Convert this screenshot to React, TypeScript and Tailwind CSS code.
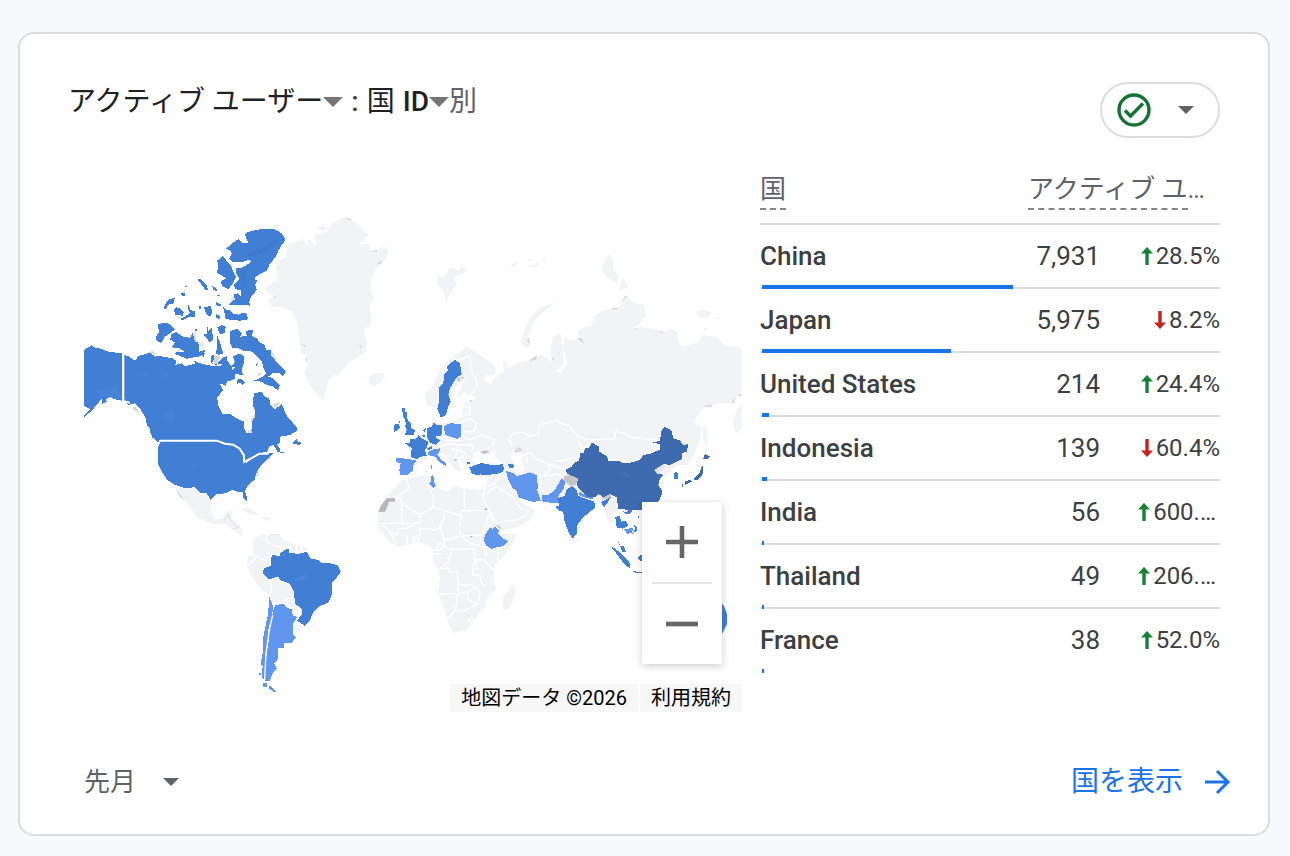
import { useState } from "react";

const rows = [
    { country: 'China', users: '7,931', change: '28.5%', up: true, bar: 251 },
    { country: 'Japan', users: '5,975', change: '8.2%', up: false, bar: 189 },
    { country: 'United States', users: '214', change: '24.4%', up: true, bar: 7 },
    { country: 'Indonesia', users: '139', change: '60.4%', up: false, bar: 5 },
    { country: 'India', users: '56', change: '600.…', up: true, bar: 2 },
    { country: 'Thailand', users: '49', change: '206.…', up: true, bar: 2 },
    { country: 'France', users: '38', change: '52.0%', up: true, bar: 2 },
];

const LAND = '#f1f3f4';
const LOW = '#6196ee';
const MID = '#417fd5';
const HIGH = '#3e6ab0';
const SHADE = '#c4c4c4';

function Caret({ className }: { className: string }) {
    return (
        <svg className={className} viewBox="0 0 20 10" preserveAspectRatio="none" fill="currentColor" aria-hidden="true">
            <path d="M0 0H20L10 10Z" />
        </svg>
    )
}

function Trend({ up }: { up: boolean }) {
    return up ? (
        <svg className="w-3 h-[18px] text-[#188038]" viewBox="0 0 12 18" fill="currentColor" aria-label="up">
            <path d="M6 0L12 6.5H7.7V18H4.3V6.5H0Z" />
        </svg>
    ) : (
        <svg className="w-3 h-[18px] text-[#c5221f]" viewBox="0 0 12 18" fill="currentColor" aria-label="down">
            <path d="M6 18L0 11.5H4.3V0H7.7V11.5H12Z" />
        </svg>
    )
}

// each continent is drawn on its own sheet at three times the map scale
function WorldMap() {
    return (
        <svg className="block w-full" viewBox="84 170 658 542" role="img" aria-label="国別のアクティブ ユーザー">
            {/* Eurasia */}
            <g fill={LAND}>
                <path d="M426 405L425 393L433 387L438 373L445 365L450 357L460 352L467 347L477 353L492 363L496 369L494 375L486 375L484 380L490 384L497 376L504 372L503 362L505 361L508 368L520 362L527 361L537 356L543 355L553 362L550 352L553 336L560 333L562 340L563 350L563 365L556 371L560 373L566 367L567 362L563 347L565 337L570 340L580 339L578 330L592 325L593 317L600 312L613 308L620 307L627 295L633 303L644 305L646 315L640 324L633 328L643 327L667 332L670 328L677 332L679 344L684 347L699 342L702 335L717 337L725 346L738 347L742 350V393L733 403H720L705 407L693 422L702 427L700 440L693 457L687 465L678 465L664 476L660 490L640 512L622 508L615 512L613 523L607 519L602 503L594 505L573 538L562 506L542 502L520 498L513 490L519 500L526 505L535 510L530 520L517 527L501 531L495 520L484 500L487 483L489 478L472 476L468 466L458 459L461 472L455 470L446 456L440 452L448 465L430 450L426 460L400 476L397 460L411 458L407 445L420 434L431 425L434 418L438 424L452 421L463 417L459 406L457 396L462 386L466 378L455 388L448 405L446 414L440 418L436 408Z" />
                <path d="M661 447L666 440L668 448L664 454Z" />
                <path d="M703 426L707 428L708 445L703 443Z" />
                <path d="M742 403L737 410L733 420L735 431L738 433L742 427Z" />
                <path d="M437 275L443 278L450 268L456 269L460 272L454 278L457 284L451 292L446 302L443 290L438 285Z" />
                <path d="M452 274L463 267L468 270L460 276Z" />
            </g>
            {/* seas cut into Eurasia */}
            <g fill="#fff">
                <path d="M472 461L474 453L482 450L488 455L496 450L494 456L503 464L488 463L478 465Z" />
                <path d="M511 456L515 449L522 451L521 459L525 469L522 474L516 470Z" />
                <path d="M458 397L464 392L471 396L477 398L470 401L464 403L462 413L457 410Z" />
            </g>

            <g transform="translate(500 240) scale(.33333)">
                <g fill={LAND}>
                    <path d="M62 310L75 265L90 235L120 205L160 188L158 195L125 220L100 245L85 285L90 320L75 320Z" />
                    <path d="M305 90L315 60L328 42L340 62L340 85L355 110L350 130L320 110Z" />
                    <path d="M355 152L370 112L386 142Z" />
                    <path d="M585 215L605 208L632 215L630 230L600 235Z M640 228L665 233L652 238Z M610 262L624 268L614 272Z" />
                    <path d="M30 75L52 62L45 82Z M80 60L95 55L90 65Z M85 80L120 65L112 78L92 84Z M118 62L138 54L132 62Z" />
                </g>
                <path d="M85 290L90 312L82 305Z M88 362L104 350L112 348L106 360Z M155 350L165 362L158 360Z M230 292L246 296L252 312Z M362 188L378 166L380 170L366 186Z M336 204H352V208H336Z M400 270L412 264V268Z M470 270L490 276V280Z M614 498L636 494V498L618 502Z M694 488L706 474L702 488Z M715 464L724 462V472Z" fill="#d3d3d3" />
                <path d="M25 600L40 580L75 578L90 590L118 580L118 555L170 540L180 550L205 555L235 590L265 600L345 596L345 575L370 580L395 592L450 598L475 596" fill="none" stroke="#fff" strokeWidth="4" />
            </g>

            {/* Africa and Arabia */}
            <g transform="translate(370 460) scale(.33333)">
                <path fill={LAND} d="M90 65L110 55L175 45L195 48L195 80L235 95L250 80L285 85L330 90L345 90L335 105L345 130L365 175L380 205L395 220L440 222L435 240L400 290L375 315L370 350L378 390L350 415L345 445L325 460L310 490L285 512L250 518L235 490L220 440L205 400L210 350L205 325L188 300L190 270L180 258L155 250L140 248L85 260L60 245L40 225L25 205L25 155L45 115L65 95Z" />
                <path fill={LAND} d="M432 372L438 390L430 420L415 450L400 448L398 415L410 400Z" />
                <path d="M338 100L348 130L368 165L392 208L410 206L396 214L384 206L360 165L342 130Z" fill="#fff" />
                <g fill="none" stroke="#fff" strokeWidth="4" strokeLinejoin="round">
                    <path d="M75 115H95V190H32M75 112L118 85L110 58M95 130L150 165L188 142M195 80L182 92L192 115L188 142L225 152L275 168V152H345M283 85V152M150 165V190H95M225 152L222 175L210 200" />
                    <path d="M275 168L268 200L272 228L335 225M152 205L200 210L215 200M150 205L145 250M210 200L222 240L250 235L272 228M222 240L225 262L250 268L315 265M245 268L235 305L210 325M208 325H235L240 338L262 335L265 395" />
                    <path d="M205 402L270 400M310 265L315 298L310 320L308 345M315 298L340 300L372 330M265 370L292 378L305 372M305 345L330 345L335 370L345 378M262 400L258 445L240 470L225 470M258 455L290 450L325 430L330 400L315 378L300 395L270 400M288 400L300 425L325 430M340 262L385 265V310M385 265L418 245M335 225L345 205L355 165M345 265L348 290" />
                    <path d="M32 190L60 215L78 250M60 215L80 225L85 205L110 205L145 185M112 222V255M130 222V250M138 222V250M190 270L215 268L222 250M190 282L215 284M215 245L200 262M318 300L320 330" />
                    <path d="M395 185L440 180L470 165M468 145L474 165M352 98L380 78L430 112L455 150M352 80L372 72L400 40M296 480L306 472L313 480L304 490Z" />
                    <path d="M272 228L300 250L345 260M335 225L330 250" />
                </g>
                <path fill="#b7b7b7" d="M50 115H75V125H56L52 140L45 155H25L32 138Z" />
                <path fill="#b7b7b7" d="M342 150L348 142L354 150Z M301 228H307V232H301Z M372 190L390 200L394 210Z" />
                <path fill={LOW} shapeRendering="crispEdges" d="M355 210L360 203L368 206L375 200L388 212L384 220L398 235L416 244L402 258L380 262L366 267L350 258L341 242L345 225Z" />
            </g>

            {/* Europe */}
            <g transform="translate(370 340) scale(.33333)">
                <g fill="none" stroke="#fff" strokeWidth="4" strokeLinejoin="round">
                    <path d="M300 55L305 90L322 130L315 150L298 175M240 50L262 62L300 48M215 100L240 68M275 200H298M272 222L300 225L298 180M272 248L300 235L320 250L312 275L275 275" />
                    <path d="M275 290L300 300L335 285L375 300L368 318L340 330M205 320L235 312L275 315L310 315L305 335M225 300L245 303L275 300M240 325L262 330L255 355M262 330L290 340M205 288L225 300M262 352L300 352" />
                </g>
                <g fill={MID} shapeRendering="crispEdges">
                    <path d="M230 80L242 68L255 60L270 70L275 102L258 115L240 145L235 165L242 185L234 200L228 225L212 232L202 205L208 185V140L220 130L222 105L235 92Z" />
                    <path d="M97 205L105 204L104 215L112 216L110 235L122 250L125 265L136 270L130 285L105 286L110 268L105 260L108 248L98 225Z" />
                    <path d="M72 255L85 250L90 262L82 272L73 276Z M86 243H91V249H86Z" />
                    <path d="M105 310L120 310V296L138 297L145 286L155 296L174 304L172 320L165 330L170 348L150 350L142 357L123 352L125 325Z" />
                    <path d="M172 265L185 260L190 248L200 254L215 255L217 272L214 286L196 290L210 302L205 308L196 314L180 308L170 290Z" />
                    <path d="M158 272L168 263L165 278Z M154 284L166 286L162 292Z M172 325L185 318V326L175 330Z" />
                    <path d="M298 382L320 374L335 368L345 372L360 374L385 376L397 372L400 395L380 402L345 405L330 403L322 406L305 400Z" />
                    <path d="M292 366H300V373H292Z M415 373L430 372L433 382L418 383Z" />
                </g>
                <g fill={LOW} shapeRendering="crispEdges">
                    <path d="M222 258L245 248L255 252H272V290L262 297L240 290L225 285Z" />
                    <path d="M78 354L110 356L140 362L130 375L128 392L112 405L90 404L88 388L92 370L78 365Z" />
                    <path d="M175 335L190 328L210 325L208 338L200 342L215 360L230 372L228 378L210 368L195 350L175 345Z M183 375H186V387H183Z" />
                    <path d="M183 408L190 405L192 425L198 438L190 445L178 430L184 422Z" />
                </g>
                <path d="M330 335L345 330L360 335L342 343Z M435 332L445 322L458 330L438 338Z M252 358H260V362H252Z M296 182L304 180V186Z M270 112L282 110L278 118Z M260 118L270 110L268 126Z" fill={SHADE} />
            </g>

            {/* Asia */}
            <g transform="translate(500 410) scale(.33333)">
                <g fill="none" stroke="#fff" strokeWidth="4" strokeLinejoin="round">
                    <path d="M28 90L35 110M80 160L82 130L92 128L110 148L145 162M62 140L82 130M100 188L130 200L175 192L190 202M145 162L195 178M118 200L122 235L145 255M145 162L150 178L130 200M165 155L200 150L238 140M0 245L30 225M250 118L235 95" />
                    <path strokeWidth="5" d="M197 178L215 170L238 150L240 130L255 115L275 97L298 110V125L320 138L325 152L355 152L385 160L420 150L430 135L455 125L480 118V102L458 98L480 92L485 60L495 50L515 62L520 85L540 92L550 105L565 102" />
                </g>
                <path fill={SHADE} d="M190 200L210 193L235 203L228 225L212 228L192 212Z M305 262L320 252L335 254L330 264L310 268Z" />
                <path fill="#dcdcdc" d="M42 122L50 114L66 116L62 126L46 128Z" />
                <g fill={LOW} shapeRendering="crispEdges">
                    <path d="M18 182L40 190L48 198L62 196L90 187L110 195L114 230L112 240L122 272L100 276L80 270L55 262L50 242L38 235L25 210Z" />
                    <path d="M125 256L145 255L165 240L175 222L185 205L195 215L192 235L175 258L178 280L150 278L128 275Z" />
                    <path d="M237 245L250 252L280 263L278 268L252 262L238 255Z M372 358L400 353L396 368L382 372Z" />
                </g>
                <g fill={MID} shapeRendering="crispEdges">
                    <path d="M215 228L230 240L235 258L250 264L283 275L285 292L265 310L250 320L232 345L230 370L218 386L205 365L192 330L190 305L180 304L165 290L178 288L172 265L195 258L198 240Z" />
                    <path d="M303 276L310 272L332 262L325 275L312 292Z M0 162H8L12 178L0 185Z M24 164L40 162L42 172L28 174Z" />
                    <path d="M522 190L532 184L535 208H522Z M413 318H418V324H413Z" />
                    <path d="M346 322L358 316L364 335L378 332L385 348L368 356L350 352Z M366 302L378 308L388 296L397 302L390 312L378 312Z" />
                    <path d="M400 344L410 350L411 362L394 374L390 380L406 358Z M348 384L362 408L372 408L378 426L366 425L360 408Z" />
                    <path d="M333 410L345 415L368 435L388 455L390 474L375 465L358 442Z M415 440L428 432V456L415 448Z M395 482L414 486L428 488L410 490Z" />
                </g>
                <g fill={HIGH} shapeRendering="crispEdges">
                    <path d="M197 178L215 170L222 160L238 150L240 130L252 128L255 115L268 112L275 97L285 103L297 110L298 125L320 138L325 152L355 152L362 157L385 160L420 150L430 135L455 130L480 118V102L458 98L480 92L485 60L495 50L515 62L520 85L540 92L550 105L565 102L560 125L545 130L548 145L530 155L510 165L490 162L463 180L475 192L490 194L478 210L475 225L485 240V255L478 270L470 278H428V300L355 298L350 262L330 252L310 262L295 252L285 262L265 262L250 250L235 235L230 222L235 205L210 195L202 192Z" />
                    <path d="M610 146L615 132L632 140L620 148Z M607 165L610 185L604 200L592 210L578 208L598 190Z M554 214L570 210L576 214L556 224Z M546 222L550 220V232H546Z" />
                </g>
                <path d="M463 180L488 165L495 172L480 185L484 192L472 192Z" fill="#e4e4e6" />
                <path d="M360 182L378 188L395 208L380 202Z" fill="#4470b5" />
                <path d="M232 384L240 390L234 398Z" fill={LAND} />
            </g>
            <path d="M716 596L724 606L727 614V624L722 634L716 638Z" fill={MID} />

            {/* Greenland and Iceland */}
            <g transform="translate(260 210) scale(.33333)">
                <path fill={LAND} d="M78 105L128 87L145 108L142 85L168 108L165 75L200 65L218 40L250 22L290 38L318 72L312 95L270 104L300 102L325 102L330 122L360 118L372 110L386 122L378 145L345 180L335 210L330 235L342 265L328 295L335 320L330 350L312 355L320 395L318 425L265 460L240 490L208 505L190 572L178 560L150 525L132 490L145 455L140 435L122 430L118 380L112 340L98 305L60 290L35 292L25 270L45 258L12 242L20 228L55 208L48 170L65 145L80 142Z" />
                <path fill={LAND} d="M168 58L190 48L205 55L190 62Z M318 495L330 502L345 490L368 490L375 502L360 518L340 528L325 520L330 510Z" />
                <path d="M254 20L278 30H265Z M335 124L350 121V126Z M352 160L362 154L368 156L358 162Z M35 262L48 258V262Z M120 402L138 406L136 411Z M136 450L143 438L140 455Z M305 372L318 388Z M298 410L305 402L302 418Z M78 110L82 142Z M316 74L321 70V78Z" fill="#d3d3d3" />
            </g>

            {/* South America */}
            <g transform="translate(230 520) scale(.33333)">
                <path fill={LAND} d="M68 62L85 48L105 42L150 45L160 58L200 75L225 80L235 98L240 150L200 290L222 320L215 337L195 335L188 320L190 280L130 250L118 225L98 212L75 185L60 160L50 130L55 110L72 100L68 75Z" />
                <path d="M115 42L105 58L125 75L152 82L155 105M182 65L180 100M200 75V100M216 78L212 98M52 138L72 118L82 108L60 105M82 108L100 120L122 122M118 176L125 200L120 228M125 248L160 252L168 235L195 232M165 240L172 262L200 275M190 310L222 325" fill="none" stroke="#fff" strokeWidth="4" />
                <path d="M120 44H150M250 290L262 268M322 135L332 146" stroke="#dcdcdc" strokeWidth="2" fill="none" />
                <g shapeRendering="crispEdges">
                    <path fill={MID} stroke="#fff" strokeWidth="5" paintOrder="stroke" d="M125 105L148 108L152 98L162 92L175 85L178 98L205 102L230 95L240 115L265 120L275 130L300 130L322 135L333 155L318 175L305 190V225L295 248L270 258L250 275L240 300L225 318L200 302L215 285V268L195 250L192 215L178 190L150 180L145 170L118 178L98 160L102 145L122 138Z" />
                    <path fill={LOW} d="M135 255L160 252L175 265L186 268L188 288L202 290L190 310V345L197 352L185 368H162V385H145V415L133 430L140 445L128 460L118 485L104 482L108 430L110 400L118 350L120 300L128 280Z" />
                    <path fill={LOW} d="M117 228L122 240L130 262L125 290L115 330L110 390L105 440L103 480L95 470L98 440L92 432L98 400V360L108 310L115 280Z M98 489H112V500H99Z M118 497L124 500L138 515H130L118 506Z M88 458H94V466H88Z" />
                </g>
                <path d="M128 285L118 330L108 400L104 480" stroke="#fff" strokeWidth="4" fill="none" />
                <path d="M190 186L196 175L212 168L230 166L220 180Z" fill="#4a86d9" />
            </g>

            {/* Mexico, Central America and the Caribbean */}
            <g fill={LAND}>
                <path d="M175 486L195 488L201 493L207 494L211 500L211 510L215 519L224 518L227 511L233 511L231 518L240 526L243 535L238 534L226 524L213 524L197 517L190 507L182 495Z" />
                <path d="M174 486L180 490L187 504L181 499Z" />
                <path d="M240 509L248 508L260 515L252 515Z M261 516L272 518L266 521Z" />
            </g>
            <path d="M224 521L228 514L230 520L238 527M232 529L240 527" stroke="#e0e0e0" fill="none" />

            {/* Canada and the United States */}
            <g transform="translate(80 340) scale(.33333)">
                <g fill={SHADE} opacity="0.7">
                    <path d="M205 38L218 32L230 44Z M398 55L405 45L420 48L412 85L402 75Z M575 195L600 185L592 205Z M512 240L525 220L526 232L516 250Z M500 270L516 270L508 282Z M525 410L540 385L534 408Z M562 355L575 348L566 362Z M410 460L432 456V462Z M288 448L312 478L300 470Z M155 205L180 222L200 242L180 220L165 198Z M570 25L590 60L578 50Z M345 -30L352 20L340 0Z M530 105L545 95L540 108Z" />
                </g>
                <g fill={MID} shapeRendering="crispEdges">
                    <path d="M12 30L35 16L45 23L60 25L85 35L127 40V182L105 178L90 170L78 178L80 186L65 192L68 172L50 195L35 212L28 218L12 232V226L32 208L12 198Z" />
                    <path d="M132 45L145 48L165 62L175 48L210 38L225 50L235 48L275 54L290 62L285 75L305 70L315 80L330 75L345 72L342 62L360 70L395 78L420 78L432 70L430 52L440 58L455 80L458 92L468 78L470 52L492 48L490 75L486 82L488 105L466 102L465 115L452 122L440 125L438 138L420 130L425 143L430 150L412 172L414 195L428 222L450 222L470 235L492 245V265L500 280L515 278L512 248L526 232L525 210L518 195L522 158L545 157L555 170L568 175L570 195L585 208L605 192L615 215L625 235L640 250L652 263L650 273L630 285L600 290V310L590 312L602 330L594 337L582 318L572 320L565 335L535 340L510 355L495 365L493 345L480 325L460 312L435 310L410 302L240 301L222 298L212 280L208 262L200 255L198 235L180 205L165 190L145 195L132 183Z" />
                    <path d="M235 320L242 304H410L435 312L460 316L478 328L490 348L488 366L500 368L515 357L540 342L565 340L582 338L560 360L542 378L528 400L525 418L502 438L495 455L500 470V485L490 472L488 456L472 455L458 450L435 460L410 462L392 480L380 460L362 458L345 442L315 444L285 435L262 420L245 395L235 375Z" />
                    <path d="M450 -25L465 -32H475L485 -20L480 -10L500 -12L498 -25L510 -32L520 -28L515 -12L530 -5L540 8L555 15L558 30L572 30L575 50L585 60L600 78L617 95L608 110L598 100L580 98L572 106L560 108L580 115L588 124L600 135L594 152L580 140L560 135L545 125L522 122L548 110L558 100L550 82L545 62L530 50L518 35L490 32L475 25L458 25L450 10Z" />
                    <path d="M470 120L482 116L497 128L488 134L480 128L470 132Z M526 72L533 70L530 80Z M640 306L650 296L652 304L665 308L660 315L640 312Z M590 332L615 338L605 340Z M214 290L240 303L234 306Z" />
                </g>
                <path d="M494 242L504 248L516 244V268L508 272L496 264Z" fill="#fff" />
                <g fill="none" stroke="#fff" strokeWidth="6">
                    <path d="M130 42V184L150 188M240 302H410L435 311L460 314L479 326L492 346V366L512 356L538 341H563L570 322L582 318" />
                </g>
                <path d="M184 108L192 94L200 110Z M246 98L270 98L252 118Z M250 226L278 205L282 245Z M340 372L348 376L346 395Z M45 150L90 148L110 130L128 180L60 168Z" fill="#4a86d9" opacity="0.6" />
            </g>

            {/* Arctic islands */}
            <g transform="translate(80 210) scale(.33333)" fill={MID} shapeRendering="crispEdges">
                <path d="M450 280L456 262L460 255L466 275Z M300 252L315 240L318 250Z M282 318L306 330L310 318Z M340 390L368 415L372 400Z M285 430L300 412L300 430Z" fill="#e6e6e6" />
                <path d="M495 75L500 67L530 60L545 57L585 58L605 70L617 90L606 104L595 122L588 140L570 160L560 182L530 198L522 208L533 210L525 225L530 238L522 250L512 262L508 275L510 288L500 284H448L452 277L466 268L460 255L472 250L482 258L484 240L465 238L462 222L470 215L478 206L467 188L468 175L490 172L514 155L508 148L490 156L455 155L448 145L455 130L450 120L438 117L445 110L460 97L475 88L485 98L500 100L504 97Z" />
                <path d="M428 137L438 150L452 165L460 185L468 200L462 215L455 225L445 237L425 228L424 212L440 205L410 188L415 170L412 152Z" />
                <path d="M350 205L362 208L380 225L386 243L375 238Z M397 228L410 236V244L400 240Z M316 228H321V231H316Z M303 248L314 249V257H305Z M250 295L262 272L272 266L284 264L280 280L268 283L256 297Z" />
                <path d="M282 300L290 292L300 296L312 306L308 317L285 314Z M326 283L332 300L345 304V320L325 322L305 332L303 326L320 316L330 308L323 295Z M358 288H363V296H358Z M373 292L392 288L396 300L394 318L384 318L375 305Z" />
                <path d="M410 255H420V258H410Z M408 276L425 284L420 290L408 285Z M408 312L420 318V328L408 324Z M428 288L440 300L452 302L458 310L475 314L490 308L502 312L503 328L480 332L450 330L436 325L432 300Z" />
                <path d="M235 342L255 338L270 342L285 358L268 372L255 380L243 400L228 390L230 375L236 368Z" />
                <path d="M270 388L275 372L288 366L310 380L330 384L338 368L345 395L355 398L358 425L375 420L372 432L355 440L320 446L285 432L290 426L312 425L300 415L275 412L285 398Z" />
                <path d="M346 356H351V364H346Z M382 350L386 364L397 352L398 390L390 398L378 382L370 375L382 370Z M412 352L425 345L437 350L435 368L420 374Z M412 378L420 395L426 420L430 430L415 435L408 430L412 405Z" />
                <path d="M365 434L374 428L372 442Z M392 438L402 434V446L396 458L408 466L425 446L440 438L442 462H395Z M458 440L480 430L492 440L490 470H455L465 455Z" />
                <path d="M500 130L556 112L580 92L600 88L585 104L560 122L520 140L505 138Z M500 180L496 215L500 240L486 225L482 182Z" fill="#3d7ad0" />
            </g>
        </svg>
    )
}

export default function App() {
    const [period, setPeriod] = useState('先月');

    return (
        <div className="min-h-screen bg-[#f8f9fc] pt-8 pb-5 pl-[18px] pr-5 font-[Roboto,'Noto_Sans_CJK_JP',sans-serif] text-[#3c4043]">
            <section className="rounded-2xl border-2 border-[#dadce0] bg-white pt-12 pb-8 pl-12">
                <header className="flex items-start justify-between pr-12">
                    <h1 className="flex items-center text-[28px] leading-10">
                        <button className="flex items-center text-[#202124]">
                            アクティブ ユーザー
                            <Caret className="w-5 h-[10px] text-[#757575]" />
                        </button>
                        <span className="px-2 font-medium">:</span>
                        <button className="flex items-center font-medium text-[#202124]">
                            <span className="font-normal mr-2">国</span>ID
                            <Caret className="w-5 h-[10px] text-[#757575]" />
                        </button>
                        <span className="text-[#5f6368]">別</span>
                    </h1>
                    <button className="flex h-14 w-[120px] items-center justify-between rounded-full border-2 border-[#dadce0] pl-[14px] pr-6" aria-label="データの品質">
                        <svg className="size-9" viewBox="0 0 36 36" fill="none" stroke="#137333" strokeWidth="3.4">
                            <circle cx="18" cy="18" r="15" />
                            <path d="M9 18.5L14.5 24L27 11.5" />
                        </svg>
                        <Caret className="w-4 h-2 text-[#5f6368]" />
                    </button>
                </header>

                <div className="mt-8 flex items-start gap-[18px] pl-4 pr-12">
                    <div className="relative min-w-0 flex-1">
                        <WorldMap />
                        <div className="absolute right-5 bottom-12 flex w-20 flex-col bg-white shadow-[0_2px_8px_rgba(0,0,0,0.2)]">
                            <button className="flex h-20 items-center justify-center" aria-label="拡大">
                                <svg className="size-8" viewBox="0 0 32 32" fill="#666">
                                    <path d="M13.7 0H18.3V13.7H32V18.3H18.3V32H13.7V18.3H0V13.7H13.7Z" />
                                </svg>
                            </button>
                            <div className="mx-[10px] h-[2px] bg-[#e6e6e6]" />
                            <button className="flex h-20 items-center justify-center" aria-label="縮小">
                                <svg className="size-8" viewBox="0 0 32 32" fill="#666">
                                    <path d="M0 13.7H32V18.3H0Z" />
                                </svg>
                            </button>
                        </div>
                        <div className="absolute right-0 bottom-0 flex gap-[2px] text-xl leading-7 text-black">
                            <span className="bg-[#f7f7f7] px-[11px]">地図データ ©2026</span>
                            <a href="#" className="bg-[#f7f7f7] px-[11px]">利用規約</a>
                        </div>
                    </div>

                    <table className="w-[460px] table-fixed border-separate border-spacing-0">
                        <colgroup>
                            <col />
                            <col className="w-[72px]" />
                            <col className="w-[120px]" />
                        </colgroup>
                        <thead>
                            <tr className="h-[55px] text-left align-top text-[26px] leading-[38px] text-[#5f6368]">
                                <th className="border-b-2 border-[#dadce0] p-0 font-normal">
                                    <span className="inline-block border-b-2 border-dashed border-[#80868b]">国</span>
                                </th>
                                <th colSpan={2} className="border-b-2 border-[#dadce0] p-0 font-normal">
                                    <span className="inline-block border-b-2 border-dashed border-[#80868b]">アクティブ ユ</span>…
                                </th>
                            </tr>
                        </thead>
                        <tbody>
                            {rows.map((row) => (
                                <tr key={row.country} className="group h-16 text-[26px]">
                                    <th className="relative border-b-2 border-[#dadce0] p-0 text-left font-medium group-last:border-transparent">
                                        {row.country}
                                        <span className="absolute left-[2px] -bottom-[2px] h-1 bg-[#1a73e8]" style={{ width: row.bar }} />
                                    </th>
                                    <td className="border-b-2 border-[#dadce0] p-0 text-right group-last:border-transparent">{row.users}</td>
                                    <td className="border-b-2 border-[#dadce0] p-0 text-2xl group-last:border-transparent">
                                        <div className={row.change.endsWith('…') ? 'flex items-center justify-end gap-[3px] pr-1' : 'flex items-center justify-end gap-[3px]'}>
                                            <Trend up={row.up} />
                                            <span>{row.change}</span>
                                        </div>
                                    </td>
                                </tr>
                            ))}
                        </tbody>
                    </table>
                </div>

                <footer className="mt-[50px] flex items-center justify-between pl-4 pr-[37px] leading-10">
                    <label className="relative flex items-center text-[26px] text-[#5f6368]">
                        <select
                            className="w-28 appearance-none bg-transparent"
                            aria-label="期間"
                            value={period}
                            onChange={(e) => setPeriod(e.target.value)}
                        >
                            <option>先月</option>
                            <option>先週</option>
                        </select>
                        <Caret className="pointer-events-none absolute left-[79px] w-4 h-2" />
                    </label>
                    <a href="#" className="flex items-center gap-5 text-[28px] text-[#1a73e8]">
                        国を表示
                        <svg className="size-7" viewBox="0 0 28 28" fill="none" stroke="currentColor" strokeWidth="3">
                            <path d="M2 14H25M14 3L25 14L14 25" />
                        </svg>
                    </a>
                </footer>
            </section>
        </div>
    )
}
